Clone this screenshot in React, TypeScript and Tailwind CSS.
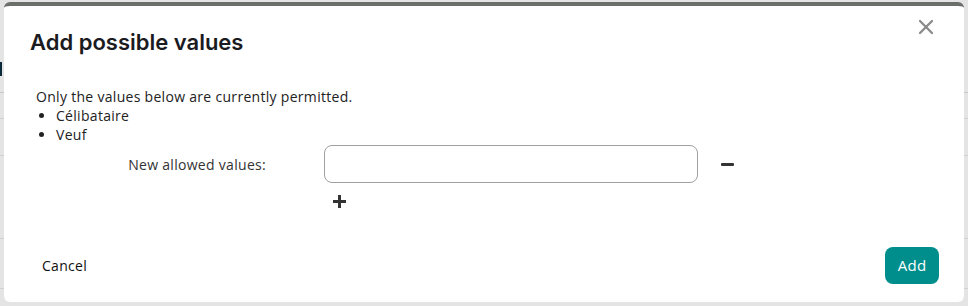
import { X } from "lucide-react";

const body = { fontFamily: "'Open Sans', 'Noto Sans', sans-serif" };
const head = { fontFamily: "Inter, 'Noto Sans', sans-serif" };

export default function App() {
  return (
    <div className="w-[968px] h-[306px] bg-[#e4e4e4] relative overflow-hidden tracking-[0.3px]" style={body}>
      {/* page content behind the overlay */}
      <div className="absolute left-0 top-[62px] w-[2px] h-[14px] bg-[#0b2a3a]" />
      <div className="absolute left-0 top-[92px] w-[968px] h-px bg-[#c8c8c8]" />
      <div className="absolute left-0 top-[118px] w-[968px] h-px bg-[#d0d0d0]" />
      <div className="absolute left-0 top-[155px] w-[968px] h-px bg-[#d0d0d0]" />
      <div className="absolute left-0 top-[238px] w-[968px] h-px bg-[#d0d0d0]" />
      <div className="absolute left-0 top-[288px] w-[968px] h-px bg-[#d0d0d0]" />

      <div className="relative ml-[4px] mt-[2px] w-[960px] h-[300px] bg-white rounded-[6px] border-t-4 border-[#6b6e6b] flex flex-col">
        <div className="flex items-start justify-between pl-[26px] pr-[26px] pt-[22px]">
          <h2 className="text-[22px] leading-[28px] font-semibold tracking-normal text-[#1b1b1f]" style={head}>
            Add possible values
          </h2>
          <button type="button" className="text-[#8a8a8a] -mt-[13px]">
            <X size={24} strokeWidth={2.3} />
          </button>
        </div>

        <div className="pl-[32px] pt-[31px] text-[14px] leading-[19px] text-[#222]">
          <p>Only the values below are currently permitted.</p>
          <ul className="list-disc pl-[20px]">
            <li>Célibataire</li>
            <li>Veuf</li>
          </ul>
        </div>

        <div className="flex items-center mt-[1px]">
          <label className="w-[262px] text-right text-[14px] text-[#333]">New allowed values:</label>
          <input
            type="text"
            className="ml-[58px] w-[374px] h-[38px] rounded-[8px] border border-[#a0a0a0] px-3 text-[14px] outline-none"
          />
          <span className="ml-[23px] w-[13px] h-[3px] bg-[#333] rounded-[1px]" />
        </div>
        <div className="pl-[329px] pt-[12px]">
          <span className="relative block w-[13px] h-[13px]">
            <span className="absolute left-0 top-[5px] w-[13px] h-[3px] bg-[#333]" />
            <span className="absolute left-[5px] top-0 w-[3px] h-[13px] bg-[#333]" />
          </span>
        </div>

        <div className="mt-auto flex items-center justify-between pl-[38px] pr-[25px] pb-[18px]">
          <button type="button" className="text-[14px] text-[#111]">Cancel</button>
          <button type="button" className="w-[54px] h-[37px] rounded-[8px] bg-[#008e8c] text-white text-[15px]">
            Add
          </button>
        </div>
      </div>
    </div>
  );
}
